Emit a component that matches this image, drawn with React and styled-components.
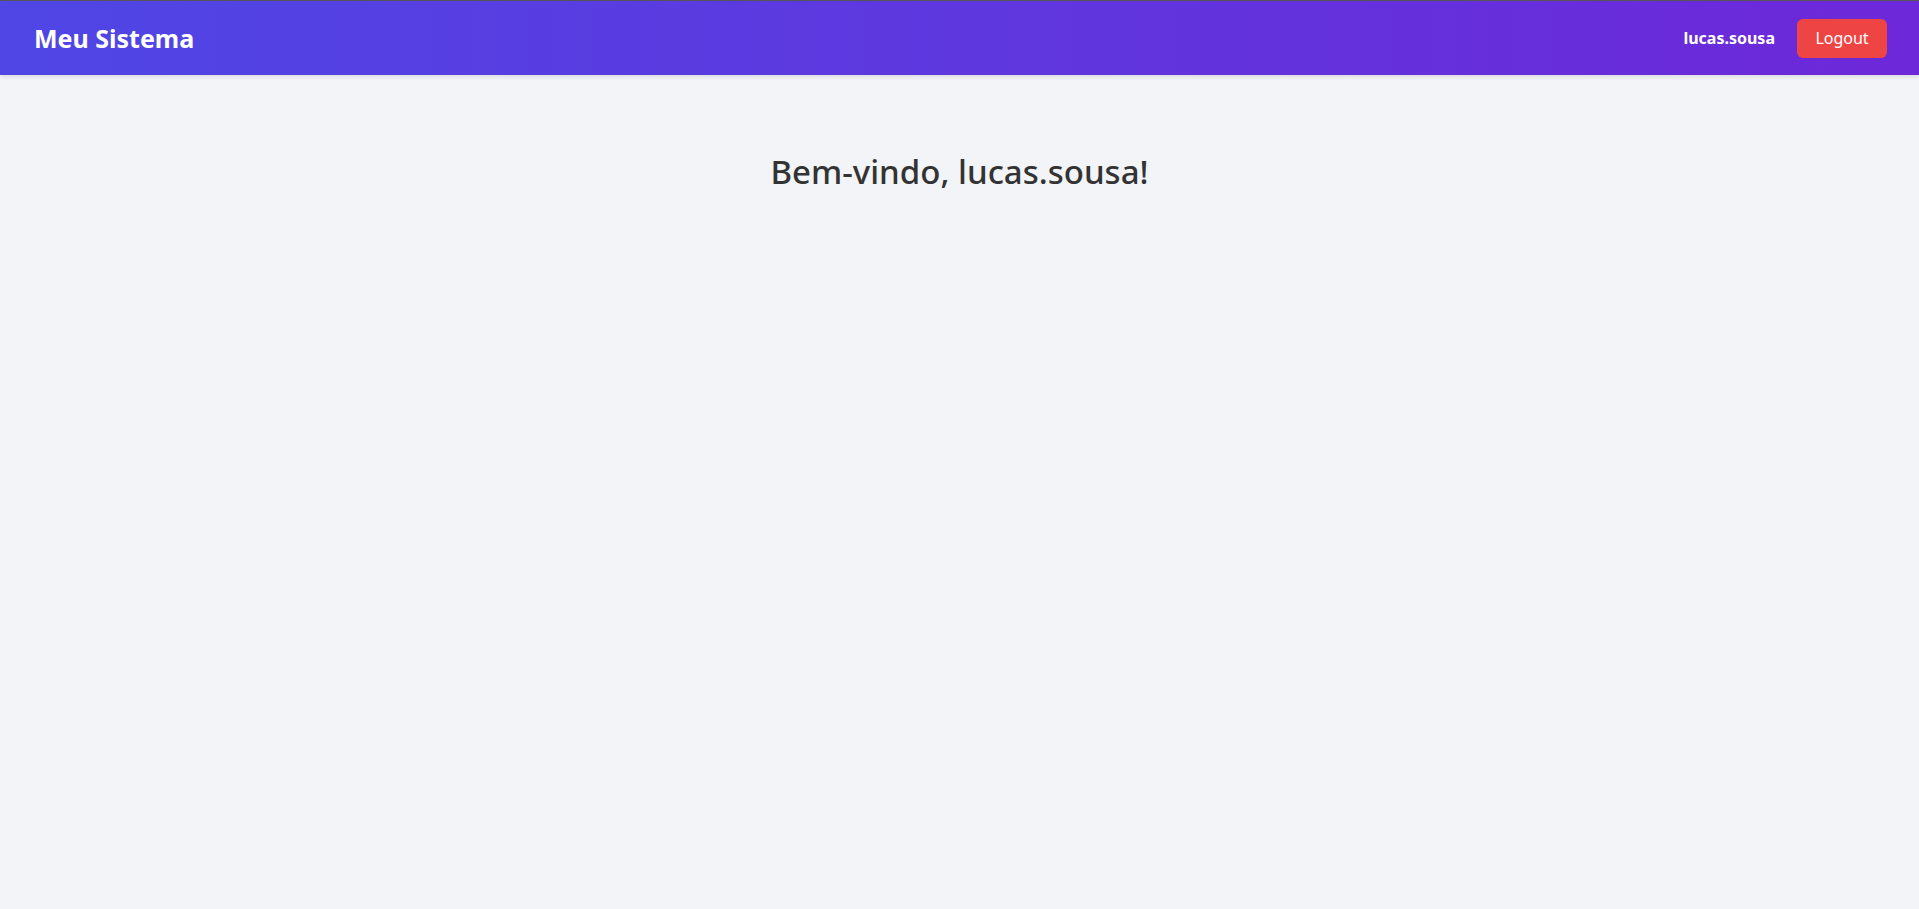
import React from "react";
import styled, { createGlobalStyle } from "styled-components";

const Global = createGlobalStyle`
  html, body { margin: 0; padding: 0; }
  body {
    background: #f3f4f8;
    font-family: "Segoe UI", "Noto Sans", "Open Sans", sans-serif;
    color: #333;
    min-height: 100vh;
    border-top: 1px solid #555;
    box-sizing: border-box;
  }
`;

const Header = styled.header`
  height: 74px;
  display: flex;
  align-items: center;
  justify-content: space-between;
  padding: 0 32px 0 34px;
  background: linear-gradient(90deg, #4f46e5 0%, #6d28d9 100%);
  box-shadow: 0 2px 4px rgba(0, 0, 0, 0.1);
  color: #fff;
`;

const Logo = styled.div`
  font-size: 25px;
  font-weight: 700;
`;

const UserArea = styled.div`
  display: flex;
  align-items: center;
  gap: 22px;
`;

const UserName = styled.span`
  font-size: 16px;
  font-weight: 700;
`;

const LogoutButton = styled.button`
  background: #ef4444;
  color: #fff;
  border: none;
  border-radius: 6px;
  width: 90px;
  height: 39px;
  font-family: inherit;
  font-size: 16px;
  cursor: pointer;
`;

const Main = styled.main`
  display: flex;
  justify-content: center;
  padding-top: 74px;
`;

const Title = styled.h1`
  margin: 0;
  font-size: 33px;
  font-weight: 500;
  color: #333;
`;

export default function App() {
  return (
    <>
      <Global />
      <Header>
        <Logo>Meu Sistema</Logo>
        <UserArea>
          <UserName>lucas.sousa</UserName>
          <LogoutButton>Logout</LogoutButton>
        </UserArea>
      </Header>
      <Main>
        <Title>Bem-vindo, lucas.sousa!</Title>
      </Main>
    </>
  );
}
